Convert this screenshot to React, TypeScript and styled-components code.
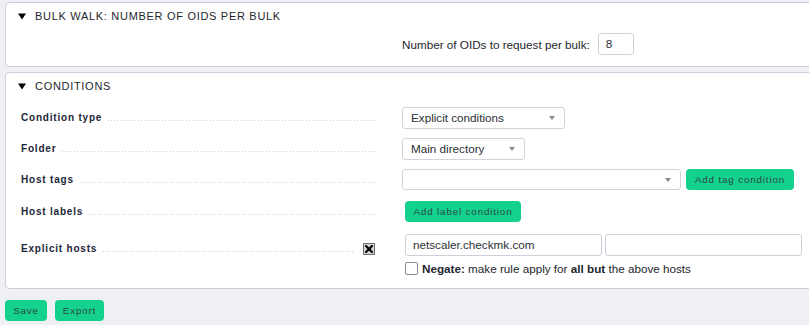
import React from 'react';
import styled, { createGlobalStyle } from 'styled-components';

const GlobalStyle = createGlobalStyle`
  html, body {
    margin: 0;
    padding: 0;
    background: #eff0f3;
    overflow: hidden;
  }
  body {
    font-family: "Liberation Sans", Arial, sans-serif;
    color: #1e262e;
  }
`;

const Page = styled.div`
  padding: 2px 0 0 5px;
  width: 840px;
`;

const Panel = styled.section`
  background: #ffffff;
  border: 1px solid #cdcddb;
  border-radius: 4px;
  margin-bottom: 5px;
`;

const PanelHeader = styled.div`
  display: flex;
  align-items: center;
  gap: 9px;
  padding: 6px 0 0 12px;
  height: 14px;
  font-size: 11px;
  line-height: 14px;
  letter-spacing: 0.7px;
  text-transform: uppercase;
  color: #1e262e;
`;

const Triangle = () => (
  <svg width="8" height="7" viewBox="0 0 8 7">
    <path d="M0 0.5 L8 0.5 L4 6.5 Z" fill="#000" />
  </svg>
);

const Body = styled.div<{ $top: number; $bottom: number }>`
  padding: ${(p) => p.$top}px 0 ${(p) => p.$bottom}px 15px;
`;

const Row = styled.div<{ $height?: number; $top?: boolean }>`
  display: flex;
  align-items: ${(p) => (p.$top ? 'flex-start' : 'center')};
  ${(p) => (p.$height ? `height: ${p.$height}px;` : '')}
`;

const LabelCell = styled.div<{ $padTop?: number }>`
  display: flex;
  align-items: baseline;
  width: 356px;
  padding-right: 25px;
  padding-top: ${(p) => p.$padTop ?? 0}px;
  box-sizing: content-box;
`;

const LabelText = styled.span`
  font-size: 10px;
  line-height: 14px;
  font-weight: bold;
  letter-spacing: 0.8px;
  color: #1b2638;
  white-space: nowrap;
`;

const Dots = styled.span`
  flex: 1;
  height: 1px;
  margin-left: 6px;
  background-image: linear-gradient(to right, #cfcfd6 1px, transparent 1px);
  background-size: 3px 1px;
  background-repeat: repeat-x;
`;

const DeleteBox = styled.span`
  align-self: center;
  margin-left: 10px;
  margin-right: 2px;
  width: 10px;
  height: 10px;
  border: 1px solid #6f6f6f;
  background: #d4d4d4;
  display: flex;
  align-items: center;
  justify-content: center;
`;

const ValueCell = styled.div<{ $indent?: number; $padTop?: number }>`
  display: flex;
  flex-direction: column;
  gap: 6px;
  padding-left: ${(p) => p.$indent ?? 0}px;
  padding-top: ${(p) => p.$padTop ?? 0}px;
  font-size: 11.7px;
`;

const Inline = styled.div<{ $gap?: number }>`
  display: flex;
  align-items: center;
  gap: ${(p) => p.$gap ?? 5}px;
`;

const Text = styled.span`
  font-size: 11.7px;
  color: #1e262e;
`;

const TextInput = styled.div<{ $width: number }>`
  box-sizing: border-box;
  width: ${(p) => p.$width}px;
  height: 22px;
  border: 1px solid #cfcfdc;
  border-radius: 3px;
  background: #fff;
  padding: 0 7px;
  font-size: 11.7px;
  line-height: 20px;
  color: #2a2f36;
`;

const Select = styled.div<{ $width: number; $height?: number }>`
  box-sizing: border-box;
  width: ${(p) => p.$width}px;
  height: ${(p) => p.$height ?? 22}px;
  border: 1px solid #d3d3dc;
  border-radius: 3px;
  background: #fff;
  padding: 0 8px;
  display: flex;
  align-items: center;
  justify-content: space-between;
  font-size: 11.7px;
  color: #2a2f36;
`;

const Caret = styled.span`
  width: 0;
  height: 0;
  border-left: 3.5px solid transparent;
  border-right: 3.5px solid transparent;
  border-top: 4px solid #8a8a8a;
  margin-right: 1px;
`;

const Button = styled.button<{ $width?: number }>`
  height: 21px;
  ${(p) => (p.$width ? `width: ${p.$width}px;` : '')}
  border: none;
  border-radius: 4px;
  background: #15d18e;
  color: #2b4a44;
  font-family: "Liberation Sans", Arial, sans-serif;
  font-size: 9.8px;
  letter-spacing: 0.85px;
  white-space: nowrap;
  padding: 0;
  cursor: pointer;
`;

const Checkbox = styled.span`
  display: inline-block;
  box-sizing: border-box;
  width: 13px;
  height: 13px;
  border: 1px solid #8c8c8c;
  border-radius: 2px;
  background: #fff;
`;

const NegateLine = styled.label`
  display: flex;
  align-items: center;
  gap: 4px;
  font-size: 11.7px;
  color: #1e262e;
`;

const Footer = styled.div`
  display: flex;
  gap: 8px;
  padding-top: 6px;
`;

const App: React.FC = () => {
  return (
    <>
      <GlobalStyle />
      <Page>
        <Panel>
          <PanelHeader>
            <Triangle />
            Bulk walk: Number of OIDs per bulk
          </PanelHeader>
          <Body $top={10} $bottom={11}>
            <Row $height={22}>
              <LabelCell />
              <Inline $gap={8}>
                <Text>Number of OIDs to request per bulk:</Text>
                <TextInput $width={36}>8</TextInput>
              </Inline>
            </Row>
          </Body>
        </Panel>

        <Panel>
          <PanelHeader>
            <Triangle />
            Conditions
          </PanelHeader>
          <Body $top={9} $bottom={13}>
            <Row $height={31}>
              <LabelCell>
                <LabelText>Condition type</LabelText>
                <Dots />
              </LabelCell>
              <Select $width={163}>
                Explicit conditions
                <Caret />
              </Select>
            </Row>
            <Row $height={31}>
              <LabelCell>
                <LabelText>Folder</LabelText>
                <Dots />
              </LabelCell>
              <Select $width={123}>
                Main directory
                <Caret />
              </Select>
            </Row>
            <Row $height={31}>
              <LabelCell>
                <LabelText>Host tags</LabelText>
                <Dots />
              </LabelCell>
              <Inline $gap={5}>
                <Select $width={279} $height={21}>
                  <span />
                  <Caret />
                </Select>
                <Button $width={108}>Add tag condition</Button>
              </Inline>
            </Row>
            <Row $height={33}>
              <LabelCell>
                <LabelText>Host labels</LabelText>
                <Dots />
              </LabelCell>
              <ValueCell $indent={3}>
                <Button $width={116}>Add label condition</Button>
              </ValueCell>
            </Row>
            <Row $top>
              <LabelCell $padTop={14}>
                <LabelText>Explicit hosts</LabelText>
                <Dots />
                <DeleteBox>
                  <svg width="8" height="8" viewBox="0 0 8 8">
                    <path d="M1 1 L7 7 M7 1 L1 7" stroke="#000" strokeWidth="2.2" strokeLinecap="square" />
                  </svg>
                </DeleteBox>
              </LabelCell>
              <ValueCell $indent={3} $padTop={6}>
                <Inline $gap={3}>
                  <TextInput $width={197}>netscaler.checkmk.com</TextInput>
                  <TextInput $width={197} />
                </Inline>
                <NegateLine>
                  <Checkbox />
                  <span>
                    <b>Negate:</b> make rule apply for <b>all but</b> the above hosts
                  </span>
                </NegateLine>
              </ValueCell>
            </Row>
          </Body>
        </Panel>

        <Footer>
          <Button $width={42}>Save</Button>
          <Button $width={49}>Export</Button>
        </Footer>
      </Page>
    </>
  );
};

export default App;
